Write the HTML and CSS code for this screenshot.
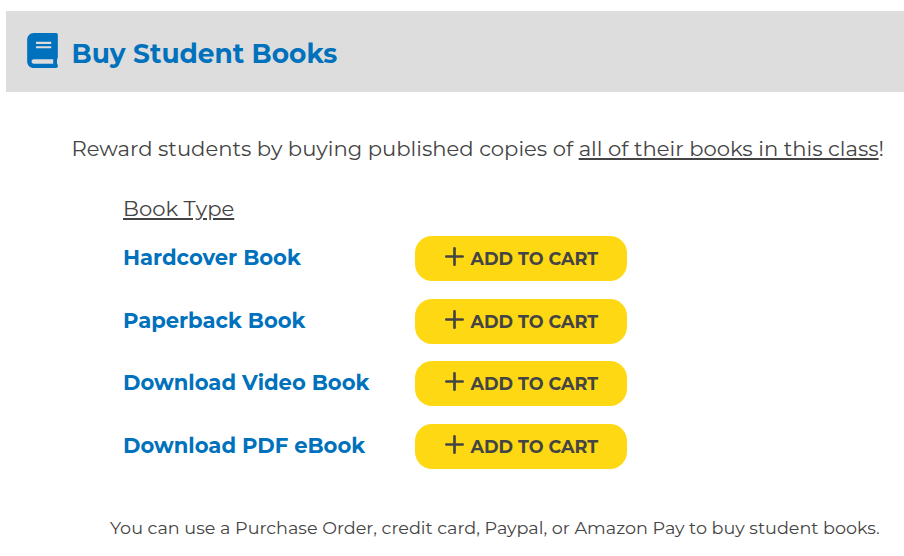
FILE: index.html
```html
<!DOCTYPE html>
<html lang="en">
<head>
    <meta charset="UTF-8">
    <meta name="viewport" content="width=device-width, initial-scale=1.0">
    <title>Buy Student Books</title>
    <link rel="stylesheet" href="styles.css">
</head>
<body>
    <svg class="icon-defs" aria-hidden="true">
        <symbol id="icon-plus" viewBox="0 0 20 20">
            <path d="M10 1.4V18.6M1.4 10H18.6" fill="none" stroke="currentColor" stroke-width="2.8" stroke-linecap="round"/>
        </symbol>
    </svg>

    <div class="panel-header">
        <svg class="book-icon" viewBox="0 0 448 512" aria-hidden="true">
            <path fill="currentColor" d="M448 360V24c0-13.3-10.7-24-24-24H96C43 0 0 43 0 96v320c0 53 43 96 96 96h328c13.3 0 24-10.7 24-24v-16c0-7.5-3.5-14.3-8.9-18.7-4.2-15.4-4.2-59.3 0-74.7 5.4-4.3 8.9-11.1 8.9-18.6zM128 134c0-3.3 2.7-6 6-6h212c3.3 0 6 2.7 6 6v20c0 3.3-2.7 6-6 6H134c-3.3 0-6-2.7-6-6v-20zm0 64c0-3.3 2.7-6 6-6h212c3.3 0 6 2.7 6 6v20c0 3.3-2.7 6-6 6H134c-3.3 0-6-2.7-6-6v-20zm253.4 250H96c-17.7 0-32-14.3-32-32 0-17.6 14.4-32 32-32h285.4c-1.9 17.1-1.9 46.9 0 64z"/>
        </svg>
        <h1 class="panel-title">Buy Student Books</h1>
    </div>

    <div class="panel-body">
        <p class="intro">Reward students by buying published copies of <a class="intro-link" href="#">all of their books in this class</a>!</p>

        <div class="book-list">
            <div class="list-heading"><span class="list-label">Book Type</span></div>
            <div class="book-row">
                <span class="book-name">Hardcover Book</span>
                <button class="cart-button"><svg class="plus-icon"><use href="#icon-plus"/></svg><span class="cart-text">ADD TO CART</span></button>
            </div>
            <div class="book-row">
                <span class="book-name">Paperback Book</span>
                <button class="cart-button"><svg class="plus-icon"><use href="#icon-plus"/></svg><span class="cart-text">ADD TO CART</span></button>
            </div>
            <div class="book-row">
                <span class="book-name">Download Video Book</span>
                <button class="cart-button"><svg class="plus-icon"><use href="#icon-plus"/></svg><span class="cart-text">ADD TO CART</span></button>
            </div>
            <div class="book-row">
                <span class="book-name">Download PDF eBook</span>
                <button class="cart-button"><svg class="plus-icon"><use href="#icon-plus"/></svg><span class="cart-text">ADD TO CART</span></button>
            </div>
        </div>

        <p class="payment-note">You can use a Purchase Order, credit card, Paypal, or Amazon Pay to buy student books.</p>
    </div>
</body>
</html>
```
FILE: styles.css
```css
* { margin: 0; padding: 0; box-sizing: border-box; }
body {
    font-family: Montserrat, Inter, "Open Sans", sans-serif;
    background: #fff;
    color: #444;
    padding: 11px 0 0 6px;
    overflow: hidden;
}
.icon-defs {
    display: none;
}
.panel-header {
    display: flex;
    align-items: flex-start;
    height: 81px;
    padding: 22px 0 0 21px;
    background: #ddd;
    color: #0071bc;
}
.book-icon {
    width: 31px;
    height: 35px;
}
.panel-title {
    margin-left: 13.5px;
    font-size: 26.4px;
    line-height: 42px;
    font-weight: 700;
    white-space: nowrap;
}
.panel-body {
    padding-left: 65px;
}
.intro {
    margin-top: 42px;
    padding-left: 0.5px;
    font-size: 21.14px;
    line-height: 30px;
    white-space: nowrap;
}
.intro-link {
    color: inherit;
    text-decoration: underline;
    text-decoration-thickness: 2px;
    text-underline-offset: 2px;
}
.book-list {
    padding: 30px 0 0 52px;
}
.list-heading {
    height: 42px;
    font-size: 21.14px;
    line-height: 30px;
}
.list-label {
    text-decoration: underline;
    text-decoration-thickness: 2px;
    text-underline-offset: 2px;
}
.book-row {
    display: grid;
    grid-template-columns: 292px 212px;
    align-items: center;
    height: 45px;
    margin-bottom: 17.67px;
}
.book-name {
    margin-top: -2.2px;
    color: #0071bc;
    font-size: 21.12px;
    font-weight: 700;
    white-space: nowrap;
}
.cart-button {
    display: flex;
    align-items: center;
    height: 45px;
    padding-left: 29.5px;
    border: none;
    border-radius: 17px;
    background: #ffd814;
    color: #444;
    font-family: inherit;
    cursor: pointer;
}
.plus-icon {
    width: 19px;
    height: 19px;
    margin: -4px 7px 0 0;
}
.cart-text {
    font-size: 17.6px;
    font-weight: 700;
    white-space: nowrap;
}
.payment-note {
    margin: 44px 0 0 39px;
    font-size: 17.6px;
    line-height: 30px;
    white-space: nowrap;
}
```
